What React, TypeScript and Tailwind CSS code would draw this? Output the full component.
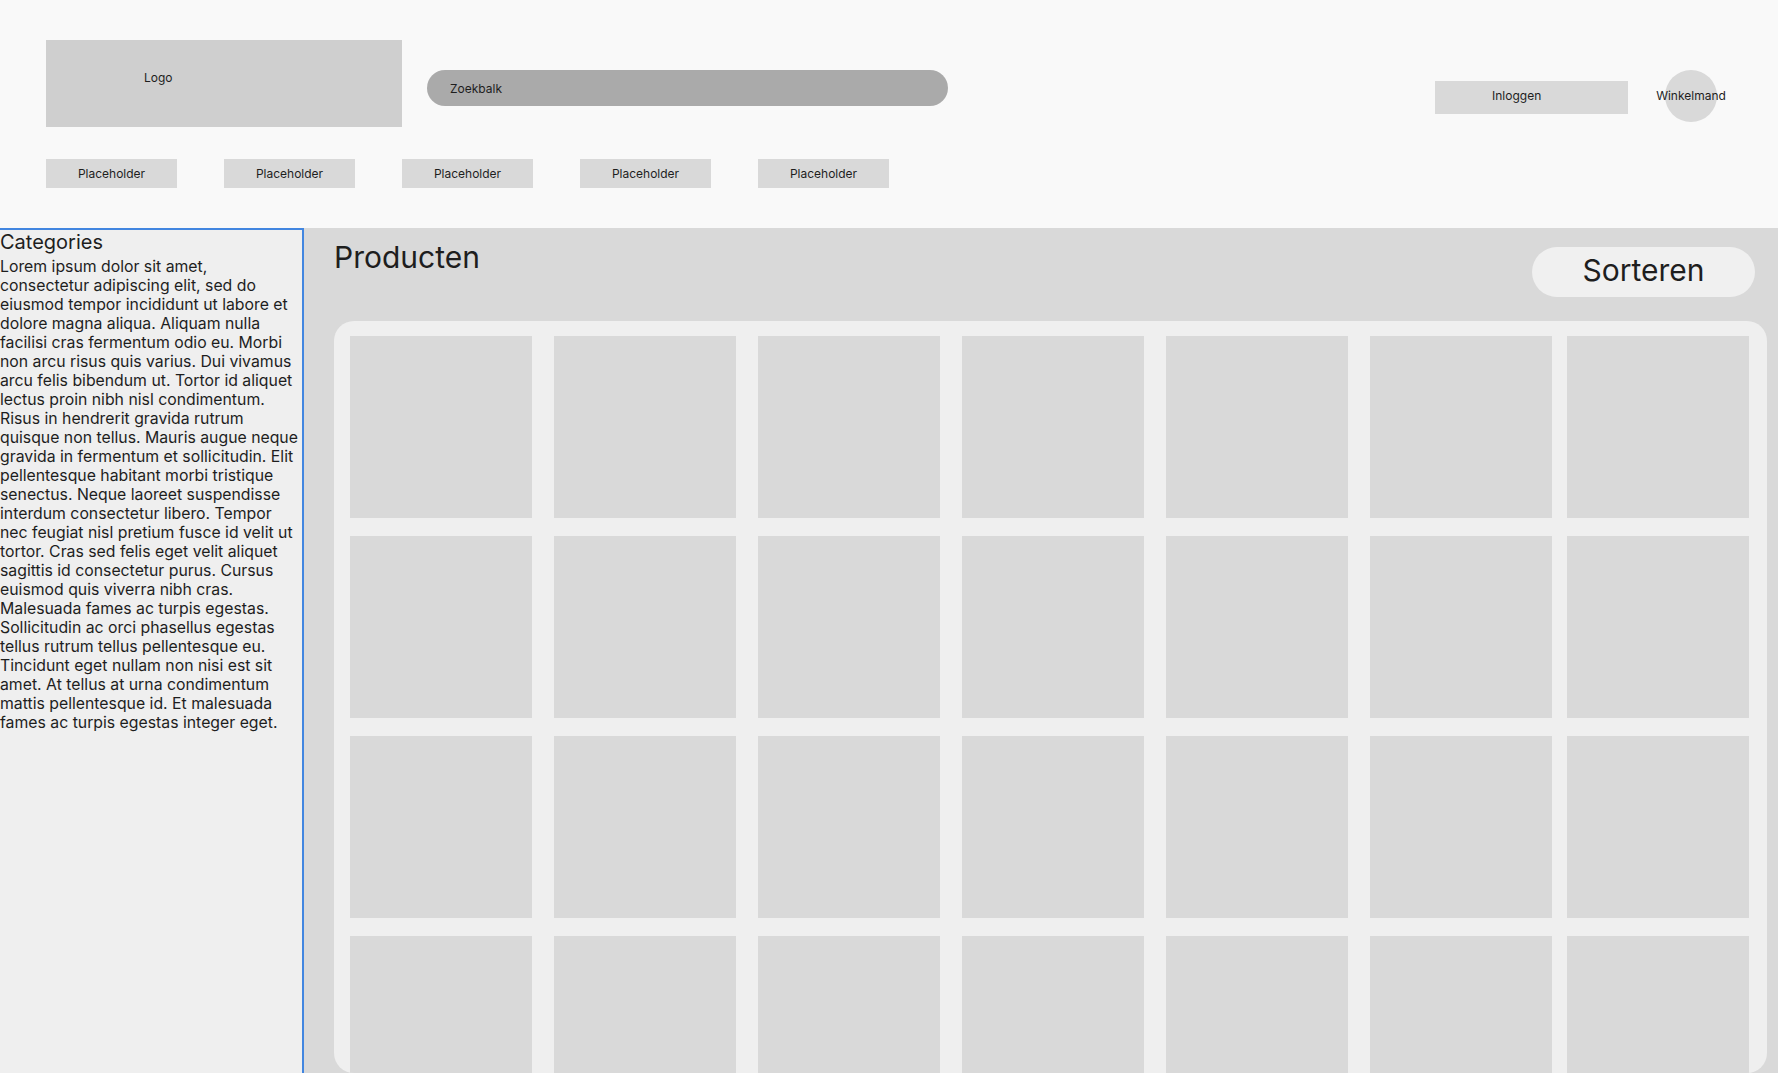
import React from 'react'

const NAV_ITEMS = ['Placeholder', 'Placeholder', 'Placeholder', 'Placeholder', 'Placeholder']

// wrapped as in the design
const LOREM_LINES = [
  'Lorem ipsum dolor sit amet,',
  'consectetur adipiscing elit, sed do',
  'eiusmod tempor incididunt ut labore et',
  'dolore magna aliqua. Aliquam nulla',
  'facilisi cras fermentum odio eu. Morbi',
  'non arcu risus quis varius. Dui vivamus',
  'arcu felis bibendum ut. Tortor id aliquet',
  'lectus proin nibh nisl condimentum.',
  'Risus in hendrerit gravida rutrum',
  'quisque non tellus. Mauris augue neque',
  'gravida in fermentum et sollicitudin. Elit',
  'pellentesque habitant morbi tristique',
  'senectus. Neque laoreet suspendisse',
  'interdum consectetur libero. Tempor',
  'nec feugiat nisl pretium fusce id velit ut',
  'tortor. Cras sed felis eget velit aliquet',
  'sagittis id consectetur purus. Cursus',
  'euismod quis viverra nibh cras.',
  'Malesuada fames ac turpis egestas.',
  'Sollicitudin ac orci phasellus egestas',
  'tellus rutrum tellus pellentesque eu.',
  'Tincidunt eget nullam non nisi est sit',
  'amet. At tellus at urna condimentum',
  'mattis pellentesque id. Et malesuada',
  'fames ac turpis egestas integer eget.',
]

const PRODUCTS = Array.from({ length: 28 }, (_, i) => i)

function Header() {
  return (
    <header className="h-[228px] shrink-0 bg-[#f9f9f9] px-[46px] pt-[40px]">
      {/* Top row */}
      <div className="flex items-start">
        <div className="w-[356px] h-[87px] bg-[#cfcfcf] pl-[98px] pt-[30px] text-[12px] leading-[15px] text-[#1e1e1e]">
          Logo
        </div>
        <div className="ml-[25px] mt-[30px] w-[521px] h-[36px] rounded-full bg-[#aaaaaa] pl-[23px] pt-[1px] flex items-center text-[12px] text-[#1e1e1e]">
          Zoekbalk
        </div>
        <div className="ml-auto mt-[41px] w-[193px] h-[33px] bg-[#d9d9d9] pl-[57px] pt-[7px] text-[12px] leading-[15px] text-[#1e1e1e]">
          Inloggen
        </div>
        <div className="ml-[37px] mr-[15px] mt-[30px] w-[52px] h-[52px] rounded-full bg-[#d9d9d9] flex items-center justify-center">
          <span className="text-[12px] text-[#1e1e1e] whitespace-nowrap">Winkelmand</span>
        </div>
      </div>

      {/* Nav */}
      <nav className="mt-[32px] flex gap-[47px]">
        {NAV_ITEMS.map((label, i) => (
          <div
            key={i}
            className="w-[131px] h-[29px] bg-[#d9d9d9] flex items-center justify-center text-[12px] text-[#1e1e1e]"
          >
            {label}
          </div>
        ))}
      </nav>
    </header>
  )
}

function Sidebar() {
  return (
    <aside className="w-[304px] shrink-0 bg-[#efefef] border-t-2 border-r-2 border-[#4286e0] text-[#1e1e1e]">
      <h2 className="text-[20px] leading-[24px] mb-[3px]">Categories</h2>
      <p className="text-[15.8px] leading-[19px]">
        {LOREM_LINES.map((line, i) => (
          <span key={i} className="block whitespace-nowrap">
            {line}
          </span>
        ))}
      </p>
    </aside>
  )
}

export default function App() {
  return (
    <div
      className="h-screen flex flex-col overflow-hidden bg-[#f9f9f9]"
      style={{ fontFamily: 'Inter, "Noto Sans", sans-serif' }}
    >
      <Header />
      <div className="flex flex-1 min-h-0">
        <Sidebar />
        <main className="flex-1 min-w-0 flex flex-col bg-[#d9d9d9] pt-[11px] pl-[30px] pr-[11px]">
          <div className="flex items-start justify-between">
            <h1 className="text-[30px] leading-[36px] text-[#1e1e1e]">Producten</h1>
            <button className="mt-[8px] mr-[12px] w-[223px] h-[50px] rounded-full bg-[#f0f0f0] pb-[3px] text-[30px] text-[#1e1e1e] flex items-center justify-center">
              Sorteren
            </button>
          </div>
          <div className="mt-[24px] flex-1 min-h-0 overflow-hidden rounded-[20px] bg-[#efefef] pt-[15px] pl-[16px] pr-[18px]">
            <div className="grid grid-cols-[repeat(6,182px)_175px] gap-x-[22px] gap-y-[18px]">
              {PRODUCTS.map((i) => (
                <div
                  key={i}
                  className={
                    i % 7 === 6
                      ? 'w-[182px] h-[182px] -ml-[7px] bg-[#d9d9d9]'
                      : 'w-[182px] h-[182px] bg-[#d9d9d9]'
                  }
                />
              ))}
            </div>
          </div>
        </main>
      </div>
    </div>
  )
}
